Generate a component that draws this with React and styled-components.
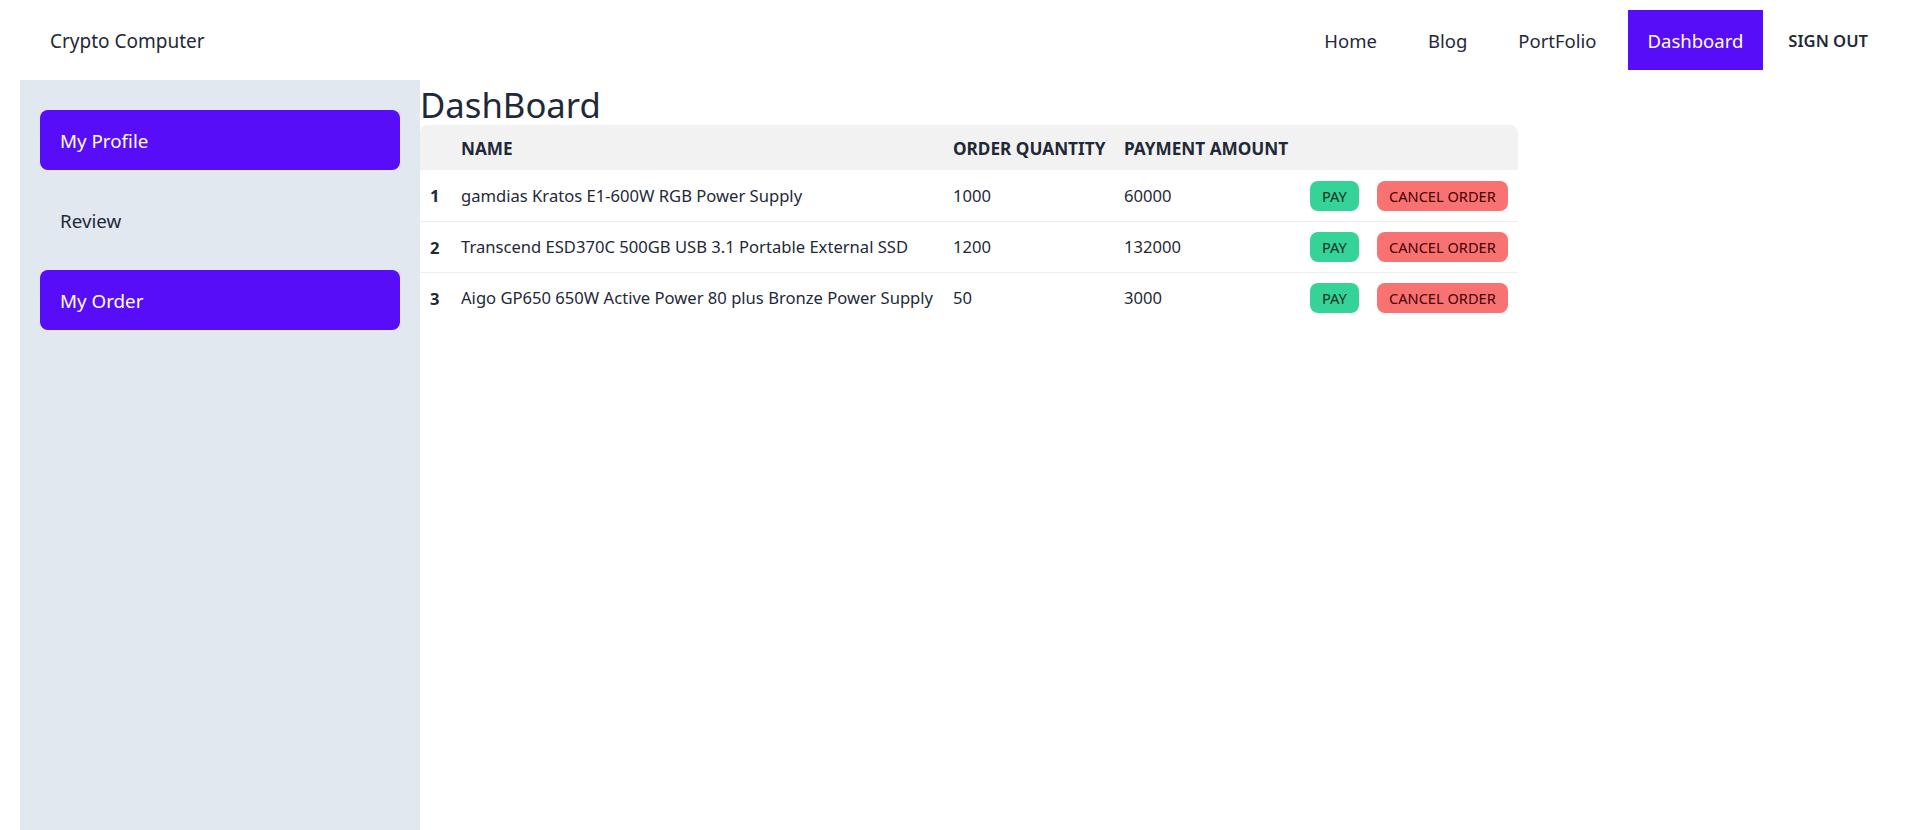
import React from 'react';
import styled, { createGlobalStyle } from 'styled-components';

const GlobalStyle = createGlobalStyle`
  html, body { margin: 0; padding: 0; background: #ffffff; }
  body {
    font-family: "Noto Sans", "Open Sans", sans-serif;
    color: #1f2937;
  }
  * { box-sizing: border-box; }
`;

const Page = styled.div`
  min-height: 100vh;
  display: flex;
  flex-direction: column;
`;

const Header = styled.header`
  height: 80px;
  flex-shrink: 0;
  display: flex;
  align-items: center;
  justify-content: space-between;
  padding: 0 52px 0 50px;
`;

const Brand = styled.a`
  padding-top: 2px;
  font-size: 19px;
  color: #1f2937;
  text-decoration: none;
`;

const Nav = styled.nav`
  display: flex;
  align-items: center;
  gap: 11px;
`;

const NavLink = styled.a`
  height: 60px;
  padding: 1px 20px 0;
  display: flex;
  align-items: center;
  font-size: 18.5px;
  text-decoration: none;
  color: ${(p) => (p.$active ? '#ffffff' : '#1f2937')};
  background: ${(p) => (p.$active ? '#570df8' : 'transparent')};
`;

const SignOut = styled.button`
  margin-left: 14px;
  padding: 0;
  border: none;
  background: none;
  font-family: inherit;
  font-size: 16.6px;
  font-weight: 600;
  color: #1f2937;
  text-transform: uppercase;
  cursor: pointer;
`;

const Body = styled.div`
  flex: 1;
  display: flex;
`;

const Sidebar = styled.aside`
  width: 400px;
  margin-left: 20px;
  flex-shrink: 0;
  background: #e2e8f0;
  padding: 30px 20px;
  display: flex;
  flex-direction: column;
  gap: 20px;
`;

const MenuItem = styled.a`
  height: 60px;
  padding: 2px 20px 0;
  display: flex;
  align-items: center;
  border-radius: 8px;
  font-size: 18.8px;
  text-decoration: none;
  color: ${(p) => (p.$active ? '#ffffff' : '#1f2937')};
  background: ${(p) => (p.$active ? '#570df8' : 'transparent')};
`;

const Main = styled.main`
  flex: 1;
  display: flex;
  flex-direction: column;
  align-items: flex-start;
`;

const Title = styled.h1`
  margin: 5px 0 0;
  font-size: 34.7px;
  font-weight: 400;
  line-height: 40px;
  color: #1f2937;
`;

const Table = styled.table`
  width: 1098px;
  table-layout: fixed;
  border-collapse: separate;
  border-spacing: 0;
  font-size: 16.6px;
`;

const HeadCell = styled.th`
  background: #f2f2f2;
  height: 45px;
  padding: 2px 10px 0;
  text-align: left;
  font-size: 17.2px;
  font-weight: 700;
  text-transform: uppercase;
  white-space: nowrap;
  line-height: 20px;
  &:first-child { border-top-left-radius: 8px; }
  &:last-child { border-top-right-radius: 8px; }
`;

const Row = styled.tr`
  & > * { border-top: ${(p) => (p.$first ? 'none' : '1px solid #eeeeee')}; }
`;

const RowHead = styled.th`
  height: 51px;
  padding: 0 10px;
  text-align: left;
  font-weight: 700;
  white-space: nowrap;
`;

const Cell = styled.td`
  height: 51px;
  padding: 0 10px;
  white-space: nowrap;
  line-height: 20px;
`;

const ActionButton = styled.button`
  height: 30px;
  padding: 0 12px;
  border: none;
  border-radius: 8px;
  font-family: inherit;
  font-size: 14.6px;
  text-transform: uppercase;
  cursor: pointer;
  background: ${(p) => (p.$tone === 'danger' ? '#f87272' : '#36d399')};
  color: ${(p) => (p.$tone === 'danger' ? '#470000' : '#003320')};
`;

const orders = [
  { id: 1, name: 'gamdias Kratos E1-600W RGB Power Supply', qty: 1000, amount: 60000 },
  { id: 2, name: 'Transcend ESD370C 500GB USB 3.1 Portable External SSD', qty: 1200, amount: 132000 },
  { id: 3, name: 'Aigo GP650 650W Active Power 80 plus Bronze Power Supply', qty: 50, amount: 3000 },
];

export default function App() {
  return (
    <>
      <GlobalStyle />
      <Page>
        <Header>
          <Brand href="#">Crypto Computer</Brand>
          <Nav>
            <NavLink href="#">Home</NavLink>
            <NavLink href="#">Blog</NavLink>
            <NavLink href="#">PortFolio</NavLink>
            <NavLink href="#" $active>Dashboard</NavLink>
            <SignOut>Sign Out</SignOut>
          </Nav>
        </Header>
        <Body>
          <Sidebar>
            <MenuItem href="#" $active>My Profile</MenuItem>
            <MenuItem href="#">Review</MenuItem>
            <MenuItem href="#" $active>My Order</MenuItem>
          </Sidebar>
          <Main>
            <Title>DashBoard</Title>
            <Table>
              <colgroup>
                <col style={{ width: 31 }} />
                <col style={{ width: 492 }} />
                <col style={{ width: 171 }} />
                <col style={{ width: 186 }} />
                <col style={{ width: 67 }} />
                <col style={{ width: 151 }} />
              </colgroup>
              <thead>
                <tr>
                  <HeadCell></HeadCell>
                  <HeadCell>Name</HeadCell>
                  <HeadCell>Order Quantity</HeadCell>
                  <HeadCell>Payment Amount</HeadCell>
                  <HeadCell></HeadCell>
                  <HeadCell></HeadCell>
                </tr>
              </thead>
              <tbody>
                {orders.map((o, i) => (
                  <Row key={o.id} $first={i === 0}>
                    <RowHead>{o.id}</RowHead>
                    <Cell>{o.name}</Cell>
                    <Cell>{o.qty}</Cell>
                    <Cell>{o.amount}</Cell>
                    <Cell><ActionButton $tone="success">Pay</ActionButton></Cell>
                    <Cell><ActionButton $tone="danger">Cancel Order</ActionButton></Cell>
                  </Row>
                ))}
              </tbody>
            </Table>
          </Main>
        </Body>
      </Page>
    </>
  );
}
